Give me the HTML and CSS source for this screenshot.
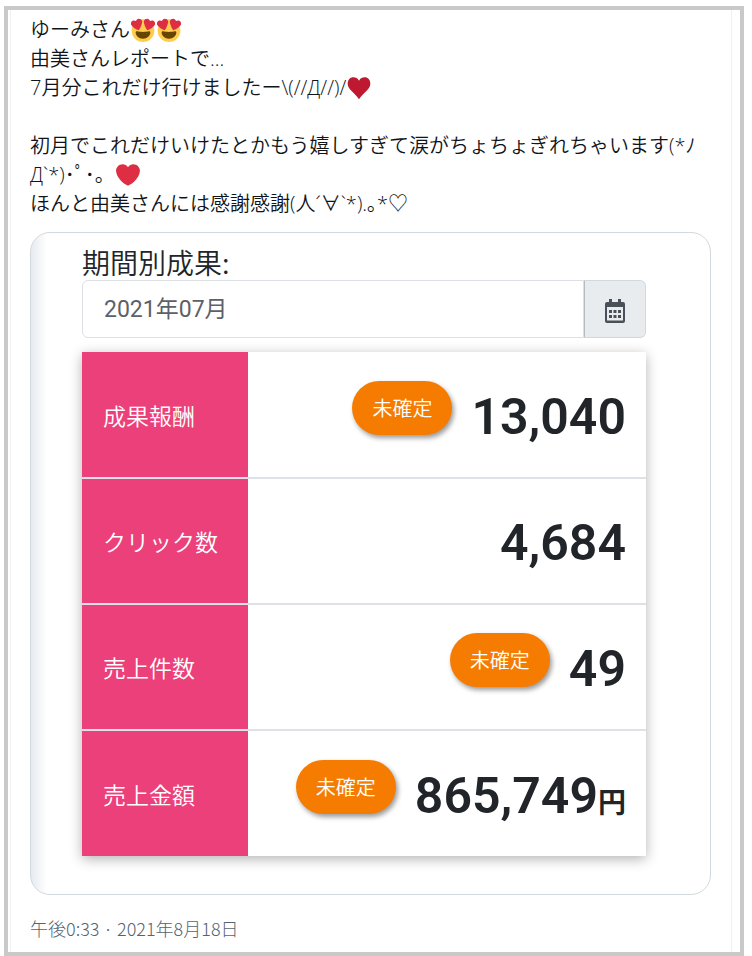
FILE: index.html
```html
<!DOCTYPE html>
<html lang="ja">
<head>
    <meta charset="UTF-8">
    <meta name="viewport" content="width=device-width, initial-scale=1.0">
    <title>期間別成果</title>
    <link rel="stylesheet" href="styles.css">
</head>
<body>
    <svg class="defs" aria-hidden="true">
        <symbol id="heart-eyes" viewBox="0 0 36 36">
            <circle cx="18" cy="19" r="17" fill="#ffcc4d"/>
            <path fill="#664500" d="M18 21c-3.6 0-6-.4-9-1-.7-.1-2 0-2 2 0 4 4.6 9 11 9s11-5 11-9c0-2-1.300-2.100-2-2-3 .6-5.400 1-9 1z"/>
            <path fill="#dd2e44" d="M16.600 4.500c-.9-2.500-3.600-3.800-6.100-3-1.500.5-2.600 1.700-3.100 3.100C6.200 3.700 4.600 3.400 3.100 3.900.6 4.800-.7 7.500.2 10c.1.400.3.700.5 1 1.800 3.200 7 6.500 11 7.200 2.600-3 4.900-8.800 5-12.400 0-.4 0-.9-.1-1.300z"/>
            <path fill="#dd2e44" d="M19.400 4.500c.9-2.500 3.600-3.800 6.100-3 1.500.5 2.600 1.700 3.100 3.100 1.200-.9 2.800-1.200 4.300-.7 2.500.9 3.800 3.600 2.900 6.100-.1.400-.3.700-.5 1-1.800 3.200-7 6.500-11 7.200-2.600-3-4.900-8.800-5-12.400 0-.4 0-.9.1-1.300z"/>
        </symbol>
        <symbol id="heart" viewBox="0 0 36 36">
            <path fill="currentColor" d="M35.900 11.800c0-5.400-4.400-9.800-9.800-9.800-3.400 0-6.300 1.700-8.100 4.300C16.200 3.700 13.200 2 9.900 2 4.500 2 .1 6.400.1 11.800c0 .8.100 1.500.3 2.200C1.700 22.600 11.200 31.600 18 34c6.800-2.400 16.300-11.400 17.600-20 .2-.7.3-1.400.3-2.200z"/>
        </symbol>
        <symbol id="heart-suit" viewBox="0 0 36 36">
            <path fill="currentColor" d="M18 7C16 3.500 13 2 9.500 2 4.500 2 1 6 1 11.500 1 20 12 25 18 35c6-10 17-15 17-23.500C35 6 31.500 2 26.500 2 23 2 20 3.500 18 7z"/>
        </symbol>
    </svg>

    <main class="frame">
        <article class="post">
            <p class="post-text">ゆーみさん<svg class="emoji" role="img" aria-label="😍"><use href="#heart-eyes"/></svg><svg class="emoji" role="img" aria-label="😍"><use href="#heart-eyes"/></svg><br>
            由美さんレポートで...<br>
            7月分これだけ行けましたー\(//Д//)/<svg class="emoji dark-heart" role="img" aria-label="♥"><use href="#heart-suit"/></svg><br>
            <br>
            初月でこれだけいけたとかもう嬉しすぎて涙がちょちょぎれちゃいます(*ﾉ<br>
            Д`*)･ﾟ･。<svg class="emoji red-heart" role="img" aria-label="❤"><use href="#heart"/></svg><br>
            ほんと由美さんには感謝感謝(人´∀`*).｡*♡</p>

            <section class="card">
                <label class="card-title" for="period">期間別成果:</label>
                <div class="period">
                    <input type="text" id="period" class="period-input" value="2021年07月">
                    <button type="button" class="period-btn" aria-label="カレンダー">
                        <svg class="calendar" viewBox="0 0 20 24">
                            <path fill="#495057" fill-rule="evenodd" d="M4 0h3v3h6V0h3v3h2a2 2 0 0 1 2 2v17a2 2 0 0 1-2 2H2a2 2 0 0 1-2-2V5a2 2 0 0 1 2-2h2zM2 8v13.500h16V8z"/>
                            <path fill="#495057" d="M4 11h3v3H4zM8.500 11h3v3h-3zM13 11h3v3h-3zM4 16h3v3H4zM8.500 16h3v3h-3zM13 16h3v3h-3z"/>
                        </svg>
                    </button>
                </div>
                <table class="results">
                    <tr>
                        <th scope="row">成果報酬</th>
                        <td><div class="result"><span class="badge">未確定</span><span class="number">13,040</span></div></td>
                    </tr>
                    <tr>
                        <th scope="row">クリック数</th>
                        <td><div class="result"><span class="number">4,684</span></div></td>
                    </tr>
                    <tr>
                        <th scope="row">売上件数</th>
                        <td><div class="result"><span class="badge">未確定</span><span class="number">49</span></div></td>
                    </tr>
                    <tr>
                        <th scope="row">売上金額</th>
                        <td><div class="result"><span class="badge">未確定</span><span class="number">865,749<span class="yen">円</span></span></div></td>
                    </tr>
                </table>
            </section>

            <time class="post-date" datetime="2021-08-18T12:33">午後0:33 · 2021年8月18日</time>
        </article>
    </main>
</body>
</html>
```

FILE: styles.css
```css
* {
    box-sizing: border-box;
}
body {
    margin: 0;
    padding: 6px 8px 2px 4px;
    background-color: #fff;
    color: #0f1419;
    font-family: "Noto Sans CJK JP", sans-serif;
}
.defs {
    display: none;
}
.frame {
    padding: 0 8px 0 2px;
    border: 4px solid #c9c9c9;
}
.post {
    padding: 5px 20px 10px 19px;
    border: solid #eff1f3;
    border-width: 0 1px;
}
.post-text {
    margin: 0 0 14px;
    font-family: "Open Sans", "Noto Sans CJK JP", sans-serif;
    font-size: 20px;
    font-weight: 350;
    line-height: 29px;
    white-space: nowrap;
}
.emoji {
    width: 24px;
    height: 24px;
    margin: 0 1px;
    vertical-align: -5px;
}
.dark-heart {
    color: #be1931;
}
.red-heart {
    color: #dd2e44;
}
.card {
    padding: 12px 64px 38px 51px;
    border: 1px solid #d3d9dd;
    border-radius: 20px;
    background: linear-gradient(to right, #e6eaef, #fff 16px);
}
.card-title {
    display: block;
    color: #212529;
    font-size: 28px;
    font-weight: 350;
    line-height: 35px;
}
.period {
    display: flex;
    height: 58px;
    margin-bottom: 14px;
}
.period-input {
    flex: 1;
    min-width: 0;
    padding: 0 21px 4px;
    border: 1px solid #dcdfe3;
    border-radius: 6px 0 0 6px;
    background-color: #fff;
    color: #5c6168;
    font-family: Roboto, "Noto Sans CJK JP", sans-serif;
    font-size: 23px;
}
.period-btn {
    display: flex;
    align-items: center;
    justify-content: center;
    width: 62px;
    padding: 4px 0 0;
    border: 1px solid #d3d8dd;
    border-left-color: #b5bbc1;
    border-radius: 0 6px 6px 0;
    background-color: #e9ecef;
}
.calendar {
    width: 20px;
    height: 24px;
}
.results {
    width: 100%;
    border-collapse: collapse;
    background-color: #fff;
    box-shadow: 0 3px 12px rgba(0, 0, 0, 0.3);
}
.results tr + tr {
    border-top: 2px solid #dee2e6;
}
.results th {
    width: 166px;
    height: 126px;
    padding: 0 21px;
    background-color: #ec407a;
    color: #fff;
    font-size: 23px;
    font-weight: 350;
    text-align: left;
    white-space: nowrap;
}
.results td {
    padding: 0 20px;
}
.result {
    display: flex;
    align-items: center;
    justify-content: flex-end;
    gap: 19px;
}
.badge {
    margin-bottom: 14px;
    padding: 12px 20px;
    border-radius: 27px;
    background-color: #f57c00;
    box-shadow: 2px 3px 5px rgba(0, 0, 0, 0.4);
    color: #fff;
    font-size: 20px;
    font-weight: 350;
    line-height: 30px;
}
.number {
    padding-top: 4px;
    color: #212529;
    font-family: Roboto, "Noto Sans CJK JP", sans-serif;
    font-size: 50px;
    font-weight: 600;
    line-height: 60px;
}
.yen {
    font-size: 28px;
    font-weight: 700;
    line-height: 28px;
}
.post-date {
    display: block;
    margin-top: 19px;
    color: #536471;
    font-size: 18px;
    font-weight: 300;
    line-height: 28px;
}
```
